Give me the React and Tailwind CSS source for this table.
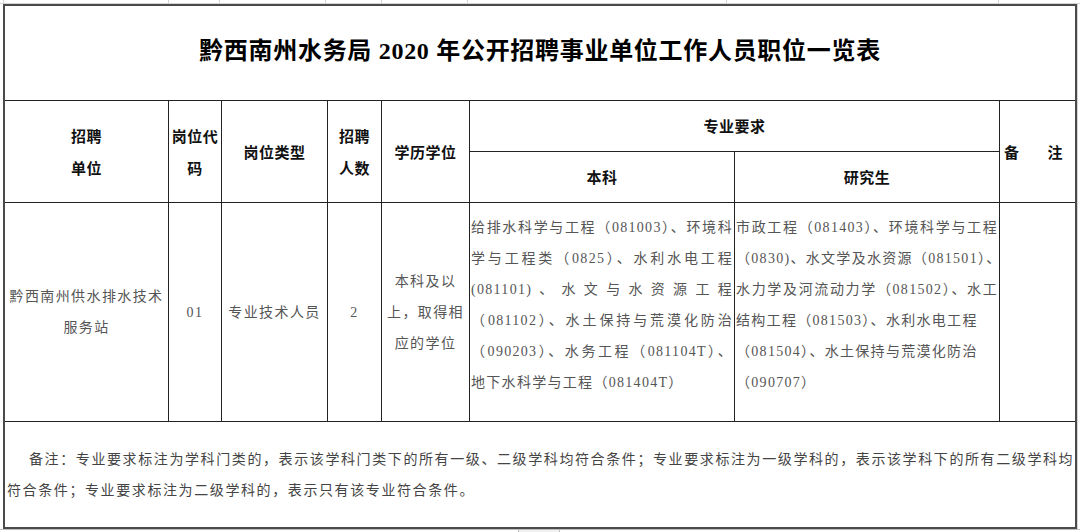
const serif = "[font-family:'Liberation_Serif','Noto_Sans_CJK_SC',serif]";
const sans = "[font-family:'Noto_Sans_CJK_SC','Liberation_Sans',sans-serif]";

function Head({ children, className = "" }) {
  return (
    <div
      className={`flex flex-col items-center justify-center text-center text-[15px] leading-[32px] font-bold text-[#111] tracking-[0.5px] ${sans} ${className}`}
    >
      {children}
    </div>
  );
}

function Cell({ children, className = "" }) {
  return (
    <div
      className={`flex flex-col items-center justify-center text-center text-[14px] leading-[31px] tracking-[1.4px] text-[#555] ${serif} ${className}`}
    >
      {children}
    </div>
  );
}

const benke = [
  "给排水科学与工程（081003）、环境科",
  "学与工程类（0825）、水利水电工程",
  "(081101)、水文与水资源工程",
  "（081102）、水土保持与荒漠化防治",
  "（090203）、水务工程（081104T）、",
  "地下水科学与工程（081404T）",
];

const yanjiu = [
  "市政工程（081403）、环境科学与工程",
  "（0830)、水文学及水资源（081501）、",
  "水力学及河流动力学（081502）、水工",
  "结构工程（081503）、水利水电工程",
  "（081504）、水土保持与荒漠化防治",
  "（090707）",
];

function Lines({ lines, justifyCount }) {
  return (
    <div className={`flex flex-col text-[14px] leading-[31px] tracking-[1.3px] text-[#555] ${serif}`}>
      {lines.map((l, i) =>
        i < justifyCount ? (
          <div key={i} className="whitespace-nowrap text-justify [text-align-last:justify]">
            {l}
          </div>
        ) : (
          <div key={i} className="whitespace-nowrap text-left">
            {l}
          </div>
        )
      )}
    </div>
  );
}

export default function App() {
  const line = "border-[#222]";
  return (
    <div className="w-[1080px] h-[532px] bg-white overflow-hidden">
      {/* spreadsheet grid strip above */}
      <div className="flex h-[4px] border-b border-[#d4d4d4]">
        <div className="w-[4px] border-r border-[#d4d4d4]" />
        <div className="w-[165px] border-r border-[#d4d4d4]" />
        <div className="w-[51px] border-r border-[#d4d4d4]" />
        <div className="w-[106px] border-r border-[#d4d4d4]" />
        <div className="w-[56px] border-r border-[#d4d4d4]" />
        <div className="w-[86px] border-r border-[#d4d4d4]" />
        <div className="w-[259px] border-r border-[#d4d4d4]" />
        <div className="w-[272px] border-r border-[#d4d4d4]" />
        <div className="flex-1" />
      </div>
      <div className="flex">
        <div className="w-[3px]" />
        <div className="w-[1074px] h-[525px] border-2 border-[#4a4a4a] grid grid-cols-[164px_53px_106px_54px_88px_265px_265px_75px] grid-rows-[95px_51px_51px_219px_105px]">
          {/* title */}
          <div className={`col-span-8 border-b ${line} flex items-center justify-center pb-[4px]`}>
            <span
              className={`text-[24px] font-bold text-black tracking-[0.7px] whitespace-nowrap ${serif}`}
            >
              黔西南州水务局 2020 年公开招聘事业单位工作人员职位一览表
            </span>
          </div>

          {/* header */}
          <Head className={`row-span-2 border-r border-b ${line}`}>
            <span>招聘</span>
            <span>单位</span>
          </Head>
          <Head className={`row-span-2 border-r border-b ${line}`}>
            <span>岗位代</span>
            <span>码</span>
          </Head>
          <Head className={`row-span-2 border-r border-b ${line}`}>
            <span>岗位类型</span>
          </Head>
          <Head className={`row-span-2 border-r border-b ${line}`}>
            <span>招聘</span>
            <span>人数</span>
          </Head>
          <Head className={`row-span-2 border-r border-b ${line}`}>
            <span>学历学位</span>
          </Head>
          <Head className={`col-span-2 border-r border-b ${line}`}>
            <span>专业要求</span>
          </Head>
          <Head className={`row-span-2 border-b ${line} !items-start pl-[4px]`}>
            <div className="flex">
              <span>备</span>
              <span className="ml-[28px]">注</span>
            </div>
          </Head>
          <Head className={`border-r border-b ${line}`}>
            <span>本科</span>
          </Head>
          <Head className={`border-r border-b ${line}`}>
            <span>研究生</span>
          </Head>

          {/* data row */}
          <Cell className={`border-r border-b ${line}`}>
            <span className="whitespace-nowrap">黔西南州供水排水技术</span>
            <span>服务站</span>
          </Cell>
          <Cell className={`border-r border-b ${line}`}>
            <span>01</span>
          </Cell>
          <Cell className={`border-r border-b ${line}`}>
            <span className="whitespace-nowrap">专业技术人员</span>
          </Cell>
          <Cell className={`border-r border-b ${line}`}>
            <span>2</span>
          </Cell>
          <Cell className={`border-r border-b ${line}`}>
            <span>本科及以</span>
            <span className="whitespace-nowrap">上，取得相</span>
            <span>应的学位</span>
          </Cell>
          <div className={`border-r border-b ${line} pt-[9px] pl-[1px] pr-[1px]`}>
            <Lines lines={benke} justifyCount={5} />
          </div>
          <div className={`border-r border-b ${line} pt-[9px] pl-[1px] pr-[1px]`}>
            <Lines lines={yanjiu} justifyCount={3} />
          </div>
          <div className={`border-b ${line}`} />

          {/* note */}
          <div
            className={`col-span-8 flex flex-col justify-center pl-[2px] pr-[7px] text-[14px] leading-[31px] tracking-[1.6px] text-[#444] ${serif}`}
          >
            <div className="whitespace-nowrap pl-[22px] text-justify [text-align-last:justify]">
              备注：专业要求标注为学科门类的，表示该学科门类下的所有一级、二级学科均符合条件；专业要求标注为一级学科的，表示该学科下的所有二级学科均
            </div>
            <div className="whitespace-nowrap">
              符合条件；专业要求标注为二级学科的，表示只有该专业符合条件。
            </div>
          </div>
        </div>
        <div className="w-[3px] border-l border-[#d4d4d4]" />
      </div>
      {/* spreadsheet grid strip below */}
      <div className="flex h-[3px] border-t border-[#bdbdbd]">
        <div className="w-[518px]" />
        <div className="w-[42px] bg-[#f2f2f2] border-x border-[#bdbdbd]" />
      </div>
    </div>
  );
}
